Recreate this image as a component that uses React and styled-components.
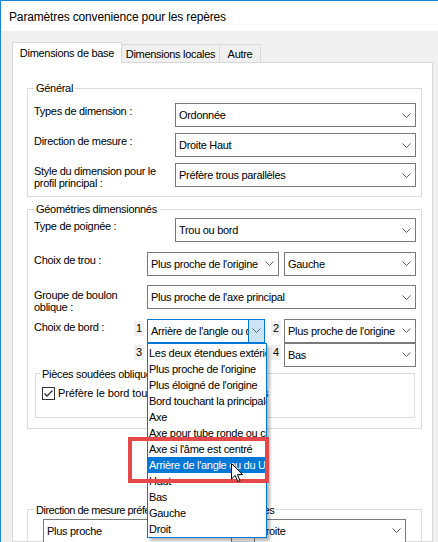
import React from "react";
import styled, { createGlobalStyle } from "styled-components";

const FONT = `"Liberation Sans", Arial, sans-serif`;

const GlobalStyle = createGlobalStyle`
  html, body { margin: 0; padding: 0; overflow: hidden; background: #f0f0f0; }
  body { font-family: ${FONT}; font-size: 11px; letter-spacing: -0.3px; color: #000; }
  *, *::before, *::after { box-sizing: border-box; }
`;

const Window = styled.div`
  position: relative;
  width: 438px;
  height: 542px;
  overflow: hidden;
  border-left: 1px solid #1883d7;
  border-top: 1px solid #1883d7;
  background: #f0f0f0;
  display: flex;
  flex-direction: column;
`;

const TitleBar = styled.div`
  flex: none;
  height: 30px;
  background: #fff;
  display: flex;
  align-items: center;
  padding: 2px 0 0 8px;
  font-size: 12px;
  letter-spacing: -0.15px;
`;

const Body = styled.div`
  flex: 1;
  min-height: 0;
  display: flex;
  flex-direction: column;
  padding: 11px 5px 0 11px;
`;

const TabRow = styled.div`
  flex: none;
  display: flex;
  align-items: flex-end;
  height: 21px;
  margin-bottom: -1px;
`;

const Tab = styled.div`
  flex: none;
  width: ${(p) => p.$w}px;
  height: ${(p) => (p.$active ? 21 : 19)}px;
  display: flex;
  align-items: center;
  justify-content: center;
  white-space: nowrap;
  background: ${(p) => (p.$active ? "#fff" : "#f0f0f0")};
  border-top: 1px solid #d9d9d9;
  border-right: 1px solid #d9d9d9;
  border-left: ${(p) => (p.$active ? "1px solid #d9d9d9" : "none")};
  padding-bottom: ${(p) => (p.$active ? 1 : 0)}px;
  position: ${(p) => (p.$active ? "relative" : "static")};
  z-index: ${(p) => (p.$active ? 2 : "auto")};
`;

const Panel = styled.div`
  flex: 1;
  min-height: 0;
  background: #fff;
  border: 1px solid #d9d9d9;
  padding: 18px 10px 0 14px;
  display: flex;
  flex-direction: column;
`;

const Group = styled.fieldset`
  flex: none;
  margin: ${(p) => p.$m || "0"};
  padding: 0;
  min-width: 0;
  border: 1px solid #dcdcdc;
`;

const Legend = styled.legend`
  padding: 0 2px;
  margin-left: ${(p) => (p.$ml ?? 6)}px;
  line-height: 14px;
  height: 14px;
  white-space: nowrap;
  letter-spacing: ${(p) => p.$ls || "-0.3px"};
`;

const GroupBody = styled.div`
  display: flex;
  flex-direction: column;
  gap: ${(p) => p.$gap || 0}px;
  padding: ${(p) => p.$pad};
`;

const Row = styled.div`
  display: flex;
  align-items: flex-start;
  height: ${(p) => p.$h || "24px"};
  gap: ${(p) => p.$gap || 0}px;
`;

const Label = styled.div`
  flex: none;
  width: ${(p) => p.$w}px;
  padding-top: ${(p) => (p.$pt ?? 2)}px;
  line-height: ${(p) => (p.$lh ?? 13)}px;
  white-space: nowrap;
`;

const Combo = styled.div`
  position: relative;
  flex: ${(p) => (p.$w ? "none" : "1 1 0")};
  width: ${(p) => (p.$w ? `${p.$w}px` : "auto")};
  min-width: 0;
  height: 24px;
  display: flex;
  align-items: stretch;
  background: #fff;
  border: 1px solid ${(p) => (p.$focus ? "#0078d7" : "#7a7a7a")};
`;

const ComboText = styled.div`
  flex: 1;
  min-width: 0;
  overflow: hidden;
  white-space: nowrap;
  display: flex;
  align-items: center;
  padding-left: 3px;
`;

const ComboArrow = styled.div`
  flex: none;
  width: ${(p) => (p.$focus ? 16 : 17)}px;
  display: flex;
  align-items: center;
  justify-content: ${(p) => (p.$focus ? "center" : "flex-end")};
  padding-right: ${(p) => (p.$focus ? 0 : 4)}px;
  background: ${(p) => (p.$focus ? "#cce4f7" : "transparent")};
  border-left: ${(p) => (p.$focus ? "1px solid #0078d7" : "none")};
`;

const ChevronSvg = styled.svg`
  display: block;
`;

const Chevron = () => (
  <ChevronSvg width="9" height="5" viewBox="0 0 9 5">
    <polyline points="0.5,0.5 4.5,4.5 8.5,0.5" fill="none" stroke="#5f5f5f" strokeWidth="1" />
  </ChevronSvg>
);

const Select = ({ value, w, focus, children }) => (
  <Combo $w={w} $focus={focus}>
    <ComboText>{value}</ComboText>
    <ComboArrow $focus={focus}>
      <Chevron />
    </ComboArrow>
    {children}
  </Combo>
);

const EdgeGrid = styled.div`
  flex: none;
  display: grid;
  grid-template-columns: 13px 124px 13px 132px;
  grid-template-rows: 24px 24px;
`;

const NumCell = styled.div`
  width: 10px;
  height: 15px;
  margin-top: 2px;
  background: #f0f0f0;
  display: flex;
  align-items: center;
  justify-content: center;
  line-height: 15px;
`;

const RowsStack = styled.div`
  display: flex;
  flex-direction: column;
  gap: 9.67px;
`;

const CheckRow = styled.div`
  display: flex;
  align-items: center;
  gap: 3px;
  height: 13px;
  white-space: nowrap;
  letter-spacing: -0.1px;
`;

const CheckBox = styled.span`
  flex: none;
  width: 13px;
  height: 13px;
  border: 1px solid #333;
  background: #fff;
  display: flex;
  align-items: center;
  justify-content: center;
`;

const DropList = styled.div`
  position: absolute;
  left: -1px;
  top: 23px;
  width: 120px;
  z-index: 10;
  background: #fff;
  border: 1px solid #0078d7;
  padding-top: 1px;
  box-shadow: 3px 3px 3px rgba(0, 0, 0, 0.28);
`;

const DropItem = styled.div`
  height: 16px;
  line-height: 16px;
  padding-left: 1px;
  white-space: nowrap;
  overflow: hidden;
  background: ${(p) => (p.$sel ? "#0078d7" : "transparent")};
  color: ${(p) => (p.$sel ? "#fff" : "#000")};
`;

const Highlight = styled.div`
  position: absolute;
  left: 127px;
  top: 436px;
  width: 141px;
  height: 46px;
  border: 4px solid #e6484a;
  z-index: 20;
  pointer-events: none;
`;

const CursorSvg = styled.svg`
  position: absolute;
  left: 230px;
  top: 462px;
  z-index: 30;
`;

const items = [
  "Les deux étendues extérieures",
  "Plus proche de l'origine",
  "Plus éloigné de l'origine",
  "Bord touchant la principale",
  "Axe",
  "Axe pour tube ronde ou carré",
  "Axe si l'âme est centré",
  "Arrière de l'angle ou du U",
  "Haut",
  "Bas",
  "Gauche",
  "Droit",
];

export default function App() {
  return (
    <>
      <GlobalStyle />
      <Window>
        <TitleBar>Paramètres convenience pour les repères</TitleBar>
        <Body>
          <TabRow>
            <Tab $active $w={110}>Dimensions de base</Tab>
            <Tab $w={98}>Dimensions locales</Tab>
            <Tab $w={41}>Autre</Tab>
          </TabRow>
          <Panel>
            <Group>
              <Legend>Général</Legend>
              <GroupBody $gap={6} $pad="8px 5px 9px 6px">
                <Row>
                  <Label $w={141}>Types de dimension :</Label>
                  <Select value="Ordonnée" />
                </Row>
                <Row>
                  <Label $w={141}>Direction de mesure :</Label>
                  <Select value="Droite Haut" />
                </Row>
                <Row>
                  <Label $w={141} $lh={12}>
                    Style du dimension pour le
                    <br />
                    profil principal :
                  </Label>
                  <Select value="Préfère trous parallèles" />
                </Row>
              </GroupBody>
            </Group>

            <Group $m="5px 0 0 0">
              <Legend>Géométries dimensionnés</Legend>
              <GroupBody $pad="2px 5px 10px 6px">
                <RowsStack>
                  <Row>
                    <Label $w={141}>Type de poignée :</Label>
                    <Select value="Trou ou bord" />
                  </Row>
                  <Row $gap={5}>
                    <Label $w={108}>Choix de trou :</Label>
                    <Select value="Plus proche de l'origine" />
                    <Select value="Gauche" />
                  </Row>
                  <Row>
                    <Label $w={113} $pt={4} $lh={12}>
                      Groupe de boulon
                      <br />
                      oblique :
                    </Label>
                    <Select value="Plus proche de l'axe principal" />
                  </Row>
                  <Row $h="auto">
                    <Label $w={100}>Choix de bord :</Label>
                    <EdgeGrid>
                      <NumCell>1</NumCell>
                      <Select w={118} focus value="Arrière de l'angle ou du U">
                        <DropList>
                          {items.map((it, i) => (
                            <DropItem key={it} $sel={i === 7}>
                              {it}
                            </DropItem>
                          ))}
                        </DropList>
                      </Select>
                      <NumCell>2</NumCell>
                      <Select w={132} value="Plus proche de l'origine" />
                      <NumCell>3</NumCell>
                      <Select w={118} value="" />
                      <NumCell>4</NumCell>
                      <Select w={132} value="Bas" />
                    </EdgeGrid>
                  </Row>
                </RowsStack>
                <Group $m="0 1px">
                  <Legend $ml={4}>Pièces soudées obliques</Legend>
                  <GroupBody $pad="6px 6px 17px 6px">
                    <CheckRow>
                      <CheckBox>
                        <svg width="11" height="11" viewBox="0 0 11 11">
                          <polyline
                            points="1.5,5.5 4,8 9.5,2.5"
                            fill="none"
                            stroke="#333"
                            strokeWidth="1.3"
                          />
                        </svg>
                      </CheckBox>
                      Préfère le bord touchant les pièces soudées
                    </CheckRow>
                  </GroupBody>
                </Group>
              </GroupBody>
            </Group>

            <Group $m="74px 0 0 0">
              <Legend $ls="-0.5px">Direction de mesure préférée pour les pièces soudées</Legend>
              <GroupBody $pad="2px 5px 10px 15px">
                <Row $gap={22}>
                  <Select w={189} value="Plus proche" />
                  <Select w={152} value="Droite" />
                </Row>
              </GroupBody>
            </Group>
          </Panel>
        </Body>
        <Highlight />
        <CursorSvg width="13" height="20" viewBox="0 0 13 20">
          <path
            d="M0.5 0.5 L0.5 16 L4.2 12.4 L6.8 18.5 L9 17.6 L6.5 11.6 L11.5 11.6 Z"
            fill="#fff"
            stroke="#000"
            strokeWidth="1"
            strokeLinejoin="miter"
          />
        </CursorSvg>
      </Window>
    </>
  );
}
